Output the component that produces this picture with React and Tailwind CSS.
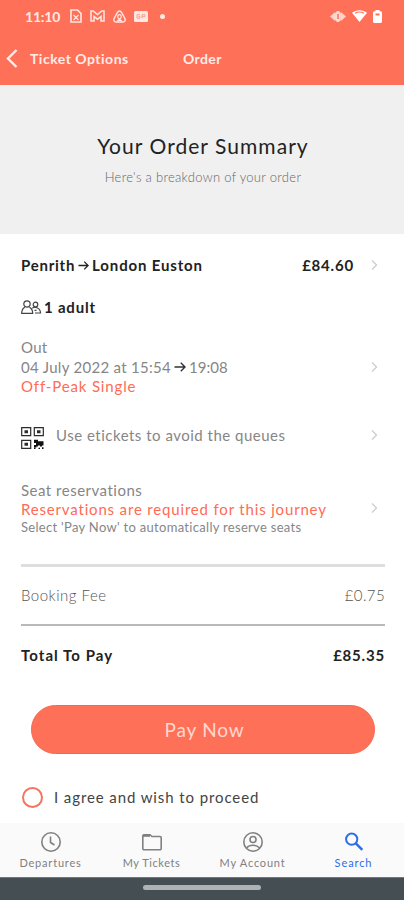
import React, { useState } from "react";

const Chevron = () => (
  <svg className="w-[7px] h-3 shrink-0" viewBox="0 0 7 12" fill="none" stroke="#cfcfcf" strokeWidth="1.4">
    <path d="M1 1.5 5.5 6 1 10.5" />
  </svg>
);

const Arrow = ({ className }) => (
  <svg className={className} viewBox="0 0 12 12" fill="none" stroke="currentColor" strokeWidth="1.4">
    <path d="M0.5 6H11M6.8 1.8 11 6 6.8 10.2" />
  </svg>
);

const StatusBar = () => (
  <div className="h-8 pl-[25px] pr-[22px] flex items-center text-[#ffe9e4]">
    <span className="w-[45px] text-[14px] font-bold tracking-[-0.2px] whitespace-nowrap">11:10</span>
    <svg className="w-3 h-[14px]" viewBox="0 0 12 14" fill="none" stroke="currentColor" strokeWidth="1.6">
      <path d="M1 1h6.5L11 4.5V13H1z" />
      <path d="M3.5 6l5 5M8.5 6l-5 5" strokeWidth="1.2" />
    </svg>
    <svg className="ml-2 w-[15px] h-3" viewBox="0 0 15 12" fill="none" stroke="currentColor" strokeWidth="1.5">
      <path d="M1 1h2.2l4.3 3.6L11.8 1H14v10h-3V6.5L7.5 9.2 4 6.5V11H1z" />
    </svg>
    <svg className="ml-2 w-[13px] h-[13px]" viewBox="0 0 13 13" fill="none" stroke="currentColor" strokeWidth="1.4">
      <path d="M6.5 1C5.2 1 4.6 2 4 3L1.1 8.6C.3 10.5 1.2 12 3 12h7c1.8 0 2.7-1.5 1.9-3.4L9 3C8.4 2 7.8 1 6.5 1z" />
      <path d="M3.8 11.5 6.5 9.3 9.2 11.5M6.5 9.3C5.3 8.3 4.7 7.3 4.7 6.4a1.8 1.8 0 0 1 3.6 0c0 .9-.6 1.9-1.8 2.9z" strokeWidth="1.2" />
    </svg>
    <svg className="ml-2 w-[14px] h-[11px]" viewBox="0 0 14 11">
      <rect width="14" height="11" rx="1.5" fill="currentColor" />
      <path d="M6 3.7H3v3.5h3V5.5H4.5M8 7.2V3.7h3v2H8" fill="none" stroke="#ff9c8a" />
    </svg>
    <span className="ml-[12px] w-[5px] h-[5px] rounded-full bg-current" />
    <svg className="ml-auto w-4 h-[11px]" viewBox="0 0 16 11" fill="currentColor">
      <path d="M0 5.5 5 1v9zM16 5.5 11 1v9z" opacity=".8" />
      <path d="M8 0c2 0 3.500 2.500 3.500 5.500S10 11 8 11 4.500 8.500 4.500 5.500 6 0 8 0z" opacity=".85" />
      <path d="M7.300 3h1.500v5H7.300z" fill="#ff7058" />
    </svg>
    <svg className="ml-[6px] w-[15px] h-3" viewBox="0 0 15 12" fill="#fff">
      <path d="M0 2.800C4-.7 11-.7 15 2.800L7.500 12z" />
      <path d="M3 3.300c2.500-1.500 6.500-1.500 9 0" stroke="#ff7058" strokeWidth="1.1" fill="none" />
    </svg>
    <svg className="ml-[6px] w-[9px] h-[13px]" viewBox="0 0 9 13" fill="#fff">
      <path d="M2.500 0h4v1.300H8l1 1V12l-1 1H1l-1-1V2.300l1-1h1.500z" />
      <path d="M2.500 3.500h4v2h-4z" fill="#ff7058" />
    </svg>
  </div>
);

const tabs = [
  {
    label: "Departures",
    spacing: "tracking-[0.8px]",
    icon: (
      <>
        <circle cx="11" cy="11" r="9.2" />
        <path d="M10.500 5.500V11.500L14.500 14" />
      </>
    ),
  },
  {
    label: "My Tickets",
    spacing: "tracking-[0.55px]",
    icon: (
      <>
        <path d="M1.800 5.500V17.500a1.200 1.200 0 0 0 1.200 1.200h16a1.200 1.200 0 0 0 1.200-1.200V6.700a1.200 1.200 0 0 0-1.200-1.200H11L9 3.700H3a1.200 1.200 0 0 0-1.200 1.200z" />
        <path d="M2 4.700h7" strokeWidth="2.2" />
      </>
    ),
  },
  {
    label: "My Account",
    spacing: "tracking-[0.8px]",
    icon: (
      <>
        <circle cx="11" cy="11" r="9.2" />
        <circle cx="11" cy="8.5" r="3" />
        <path d="M4.500 17c3-3.700 10-3.700 13 0" />
      </>
    ),
  },
  {
    label: "Search",
    spacing: "tracking-[0.9px]",
    active: true,
    icon: (
      <>
        <circle cx="8.7" cy="8.2" r="5.6" strokeWidth="2" />
        <path d="M12.800 12.300 19.300 18.800" strokeWidth="2.5" />
      </>
    ),
  },
];

const TabBar = () => (
  <nav className="h-[54px] grid grid-cols-4 bg-[#fafafa]">
    {tabs.map((tab) => (
      <button
        key={tab.label}
        type="button"
        className={`flex flex-col items-center pt-[8px] ${tab.active ? "text-[#2b6ee8]" : "text-[#808080]"}`}
      >
        <svg className="w-[22px] h-[22px]" viewBox="0 0 22 22" fill="none" stroke="currentColor" strokeWidth="1.6">
          {tab.icon}
        </svg>
        <span className={`mt-[3px] text-[11px] leading-[14px] whitespace-nowrap ${tab.spacing}`}>{tab.label}</span>
      </button>
    ))}
  </nav>
);

const PeopleIcon = () => (
  <svg className="mr-[2px] w-[21px] h-[15px]" viewBox="0 0 21 15" fill="none" stroke="#444" strokeWidth="1.2">
    <circle cx="6" cy="4" r="3.2" />
    <path d="M3.800 7.200C1.800 8.300.700 10.200.700 13.300h11c0-3.100-1.200-5-3.300-6.100" />
    <circle cx="14.500" cy="4.500" r="2.300" />
    <path d="M11.300 8.200c2-1.700 8-1.200 8.200 4.800h-5.500M13.500 10.300h2" />
  </svg>
);

const QrIcon = () => (
  <svg className="mt-[5px] w-[23px] h-[22px] shrink-0" viewBox="0 0 23 22" fill="none" stroke="#2b2b2b" strokeWidth="1.2">
    <path d="M.7.700h9v8h-9zM13.300.700h9v8h-9zM.7 13.300h9v8h-9z" />
    <path d="M3.500 3.200h3.500v3H3.500zM16 3.200h3.500v3H16zM3.500 15.800h3.500v3H3.500z" fill="#2b2b2b" stroke="none" />
    <path d="M13 12.700h4v1.500h5.500v4.300h-1.500v1h-2v-1h-2v1h-1.500v1H13v-2.500h2v-2h-2zM13 20.800h1.500V22H13zM17.500 20.800H19V22h-1.500zM21 20.300h1.500V22H21z" fill="#111" stroke="none" />
  </svg>
);

const App = () => {
  const [agreed, setAgreed] = useState(false);

  return (
    <div className="w-[404px] h-[900px] flex flex-col bg-white overflow-hidden font-['Lato',sans-serif] text-[#868686]">
      <header className="h-[85px] bg-[#ff7058]">
        <StatusBar />
        <div className="h-[53px] flex items-center text-[#ffece8] text-[14px] font-bold">
          <svg className="ml-[6px] w-3 h-[19px]" viewBox="0 0 12 19" fill="none" stroke="currentColor" strokeWidth="2.4">
            <path d="M10.500 1 2 9.500 10.500 18" />
          </svg>
          <span className="ml-3 w-[153px] tracking-[0.5px] whitespace-nowrap">Ticket Options</span>
          <span className="tracking-[0.4px]">Order</span>
        </div>
      </header>

      <section className="h-[149px] pt-[47px] pl-[2px] bg-[#f0f0f0] text-center">
        <h1 className="text-[21px] leading-[28px] tracking-[1.05px] text-[#222]">Your Order Summary</h1>
        <p className="mt-[8px] text-[13px] leading-[18px] tracking-[0.3px] font-light text-[#666]">Here's a breakdown of your order</p>
      </section>

      <main className="h-[589px] px-[21px]">
        <div className="h-[62px] pr-[5px] flex items-center text-[15px] font-bold text-[#222]">
          <span className="tracking-[0.75px]">Penrith</span>
          <Arrow className="ml-[3px] mr-[3px] w-[11px] h-[11px]" />
          <span className="tracking-[0.85px]">London Euston</span>
          <span className="ml-auto mr-[17px] tracking-[0.8px]">£84.60</span>
          <Chevron />
        </div>

        <div className="h-[22px] flex items-center text-[15px] font-bold text-[#222]">
          <PeopleIcon />
          <span className="tracking-[0.8px]">1 adult</span>
        </div>

        <div className="mt-[19px] pr-[5px] flex items-center justify-between text-[15px]">
          <div>
            <p className="leading-5 tracking-[0.3px]">Out</p>
            <p className="h-5 flex items-center whitespace-nowrap">
              <span className="tracking-[0.3px]">04 July 2022 at 15:54</span>
              <Arrow className="mx-[3px] w-3 h-3 text-[#333]" />
              <span>19:08</span>
            </p>
            <p className="leading-[19px] tracking-[0.85px] text-[#ff6b55]">Off-Peak Single</p>
          </div>
          <Chevron />
        </div>

        <div className="mt-[25px] h-[28px] pr-[5px] flex items-center text-[15px]">
          <QrIcon />
          <span className="ml-3 mr-auto tracking-[0.5px]">Use etickets to avoid the queues</span>
          <Chevron />
        </div>

        <div className="mt-[31px] pr-[5px] flex items-center justify-between">
          <div className="whitespace-nowrap">
            <p className="text-[15px] leading-[20px] tracking-[0.5px]">Seat reservations</p>
            <p className="text-[15px] leading-[19px] tracking-[0.83px] text-[#ff6b55]">Reservations are required for this journey</p>
            <p className="text-[13px] leading-[17px] tracking-[0.3px]">Select 'Pay Now' to automatically reserve seats</p>
          </div>
          <Chevron />
        </div>

        <div className="mt-[28px] -mr-[2px]">
          <div className="h-[60px] border-t-[3px] border-[#dedede] flex items-center justify-between text-[15px] font-light text-[#555]">
            <span className="tracking-[0.5px]">Booking Fee</span>
            <span className="tracking-[0.4px]">£0.75</span>
          </div>
          <div className="h-[61px] border-t-2 border-[#b9b9b9] flex items-center justify-between text-[15px] font-bold text-[#222]">
            <span className="tracking-[1.05px]">Total To Pay</span>
            <span className="tracking-[0.8px]">£85.35</span>
          </div>
        </div>

        <button
          type="button"
          className="mt-[20px] ml-[10px] w-[344px] h-[49px] block rounded-full bg-[#ff7058] border border-[#f8664c] pl-[3px] pt-[2px] text-[19px] tracking-[0.8px] text-[#ffd7cf]"
        >
          Pay Now
        </button>

        <button
          type="button"
          onClick={() => setAgreed(!agreed)}
          className="mt-[32px] ml-[1px] h-[22px] flex items-center text-[15px] text-[#444]"
        >
          <span className={`w-[21px] h-[21px] rounded-full border-2 border-[#f8735c] ${agreed ? "bg-[#ff7058]" : ""}`} />
          <span className="ml-[11px] tracking-[0.9px]">I agree and wish to proceed</span>
        </button>
      </main>

      <TabBar />
      <div className="h-[23px] bg-[#454f53] border-t border-[#6f797c]">
        <div className="mx-auto mt-[7px] w-[118px] h-[5px] rounded-full bg-[#adb3b5]" />
      </div>
    </div>
  );
};

export default App;
